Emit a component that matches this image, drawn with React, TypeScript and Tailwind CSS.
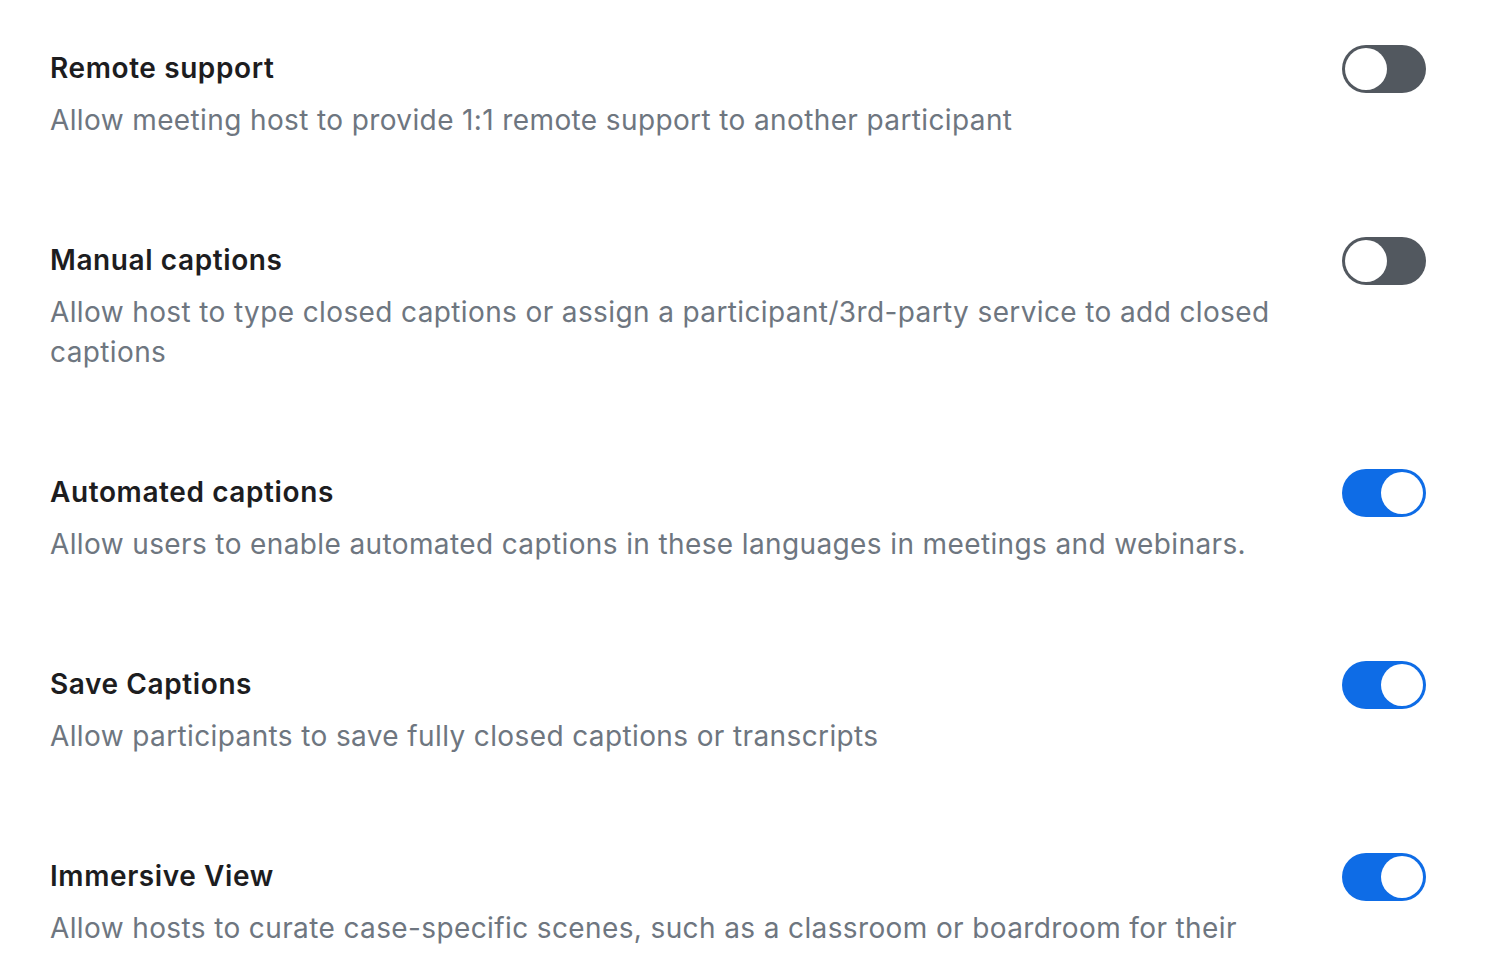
import React from "react";

type Item = { title: string; desc: string; on: boolean };

const items: Item[] = [
  { title: "Remote support", desc: "Allow meeting host to provide 1:1 remote support to another participant", on: false },
  { title: "Manual captions", desc: "Allow host to type closed captions or assign a participant/3rd-party service to add closed captions", on: false },
  { title: "Automated captions", desc: "Allow users to enable automated captions in these languages in meetings and webinars.", on: true },
  { title: "Save Captions", desc: "Allow participants to save fully closed captions or transcripts", on: true },
  { title: "Immersive View", desc: "Allow hosts to curate case-specific scenes, such as a classroom or boardroom for their", on: true },
];

function Toggle({ on }: { on: boolean }) {
  return (
    <div
      className={
        on
          ? "flex h-[48px] w-[84px] shrink-0 items-center justify-end rounded-full bg-[#0e6ce6] p-[3px]"
          : "flex h-[48px] w-[84px] shrink-0 items-center justify-start rounded-full bg-[#52585f] p-[3px]"
      }
    >
      <div className="h-[42px] w-[42px] rounded-full bg-white" />
    </div>
  );
}

export default function App() {
  return (
    <div
      className="h-[980px] w-[1488px] overflow-hidden bg-white pl-[50px] pr-[62px] pt-[48px]"
      style={{ fontFamily: "Inter, 'Noto Sans', sans-serif" }}
    >
      {items.map((it) => (
        <div key={it.title} className="flex items-start justify-between pb-[100px]">
          <div className="w-[1250px]">
            <div className="text-[28px] font-semibold leading-[40px] tracking-[0.6px] text-[#1d1d1f]">{it.title}</div>
            <div className="mt-[12px] text-[28px] leading-[40px] tracking-[0.38px] text-[#6e7680]">{it.desc}</div>
          </div>
          <div className="mt-[-3px]">
            <Toggle on={it.on} />
          </div>
        </div>
      ))}
    </div>
  );
}
